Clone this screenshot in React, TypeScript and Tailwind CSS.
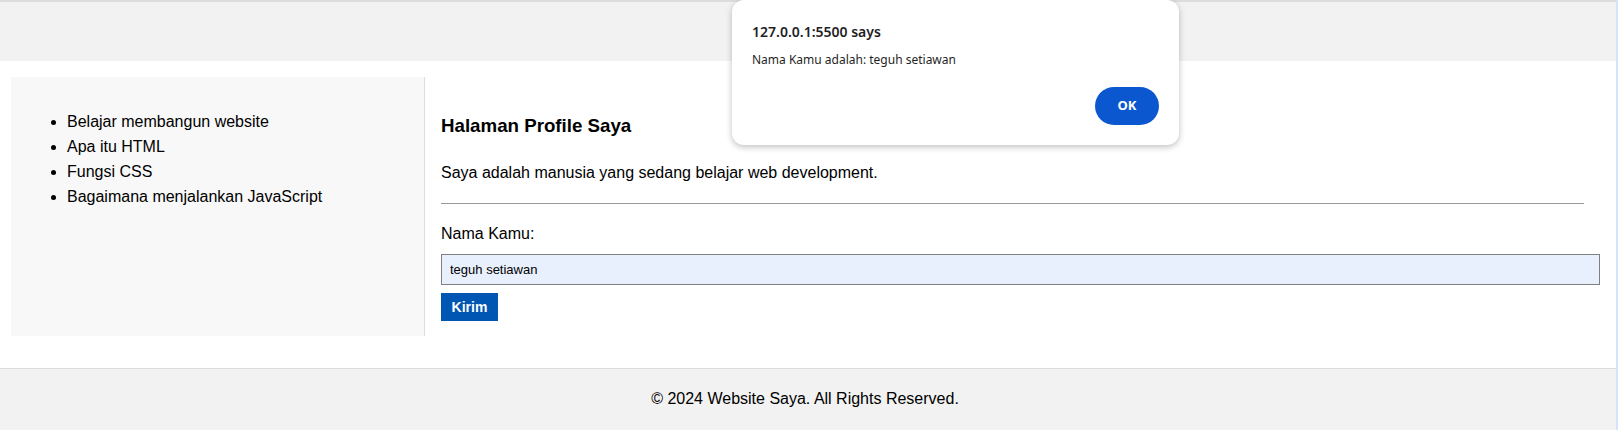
export default function App() {
  const topics = [
    "Belajar membangun website",
    "Apa itu HTML",
    "Fungsi CSS",
    "Bagaimana menjalankan JavaScript",
  ]

  return (
    <div className="relative w-[1618px] h-[430px] overflow-hidden bg-white text-black font-['Liberation_Sans',Arial,sans-serif]">
      <div className="flex h-full">
        <div className="flex-1 flex flex-col">
          <div className="h-[2px] bg-[#dcdcdc]" />
          <header className="h-[59px] bg-[#f2f2f2]" />

          <div className="flex pt-4 pb-8 pl-[11px]">
            <aside className="w-[414px] h-[259px] bg-[#f8f8f8] border-r border-[#dddddd] px-4">
              <ul className="list-disc pl-10 my-4 pt-4 text-base leading-[25px]">
                {topics.map((t) => (
                  <li key={t}>{t}</li>
                ))}
              </ul>
            </aside>

            <main className="flex-1 pl-4 pr-4">
              <h3 className="mt-[38px] text-[18.72px] font-bold leading-[22px]">Halaman Profile Saya</h3>
              <p className="mt-[27px] text-base leading-[18px]">
                Saya adalah manusia yang sedang belajar web development.
              </p>
              <hr className="mt-[21px] w-[1143px] border-t border-[#999999]" />
              <form className="mt-[21px] w-[1159px]" onSubmit={(e) => e.preventDefault()}>
                <label className="block text-base leading-[18px]">Nama Kamu:</label>
                <input
                  type="text"
                  defaultValue="teguh setiawan"
                  className="mt-[11px] block w-full h-[31px] px-2 bg-[#e8f0fe] border border-[#808080] text-[13px] text-black font-['Liberation_Sans',Arial,sans-serif] outline-none"
                />
                <button
                  type="submit"
                  className="mt-[8px] block w-[57px] h-[28px] bg-[#0056b3] text-white text-[14px] font-bold"
                >
                  Kirim
                </button>
              </form>
            </main>
          </div>

          <footer className="flex-1 border-t border-[#dddddd] bg-[#f2f2f2] flex items-center justify-center text-base pb-[1px] pr-[6px]">
            © 2024 Website Saya. All Rights Reserved.
          </footer>
        </div>
        <div className="w-[2px] bg-[#d6e4fb]" />
      </div>

      <div className="absolute left-[732px] top-0 w-[447px] h-[145px] rounded-[12px] bg-white shadow-[0_2px_6px_rgba(0,0,0,0.25)] px-5 pt-[22px] font-['Noto_Sans','Open_Sans',sans-serif] text-[#1f1f1f]">
        <div className="text-[14px] font-semibold leading-[20px]">127.0.0.1:5500 says</div>
        <div className="mt-[10px] text-[12px] leading-[16px]">Nama Kamu adalah: teguh setiawan</div>
        <div className="flex justify-end mt-[19px]">
          <button className="w-[64px] h-[38px] rounded-full bg-[#0b57d0] text-white text-[13px] font-bold">
            OK
          </button>
        </div>
      </div>
    </div>
  )
}
